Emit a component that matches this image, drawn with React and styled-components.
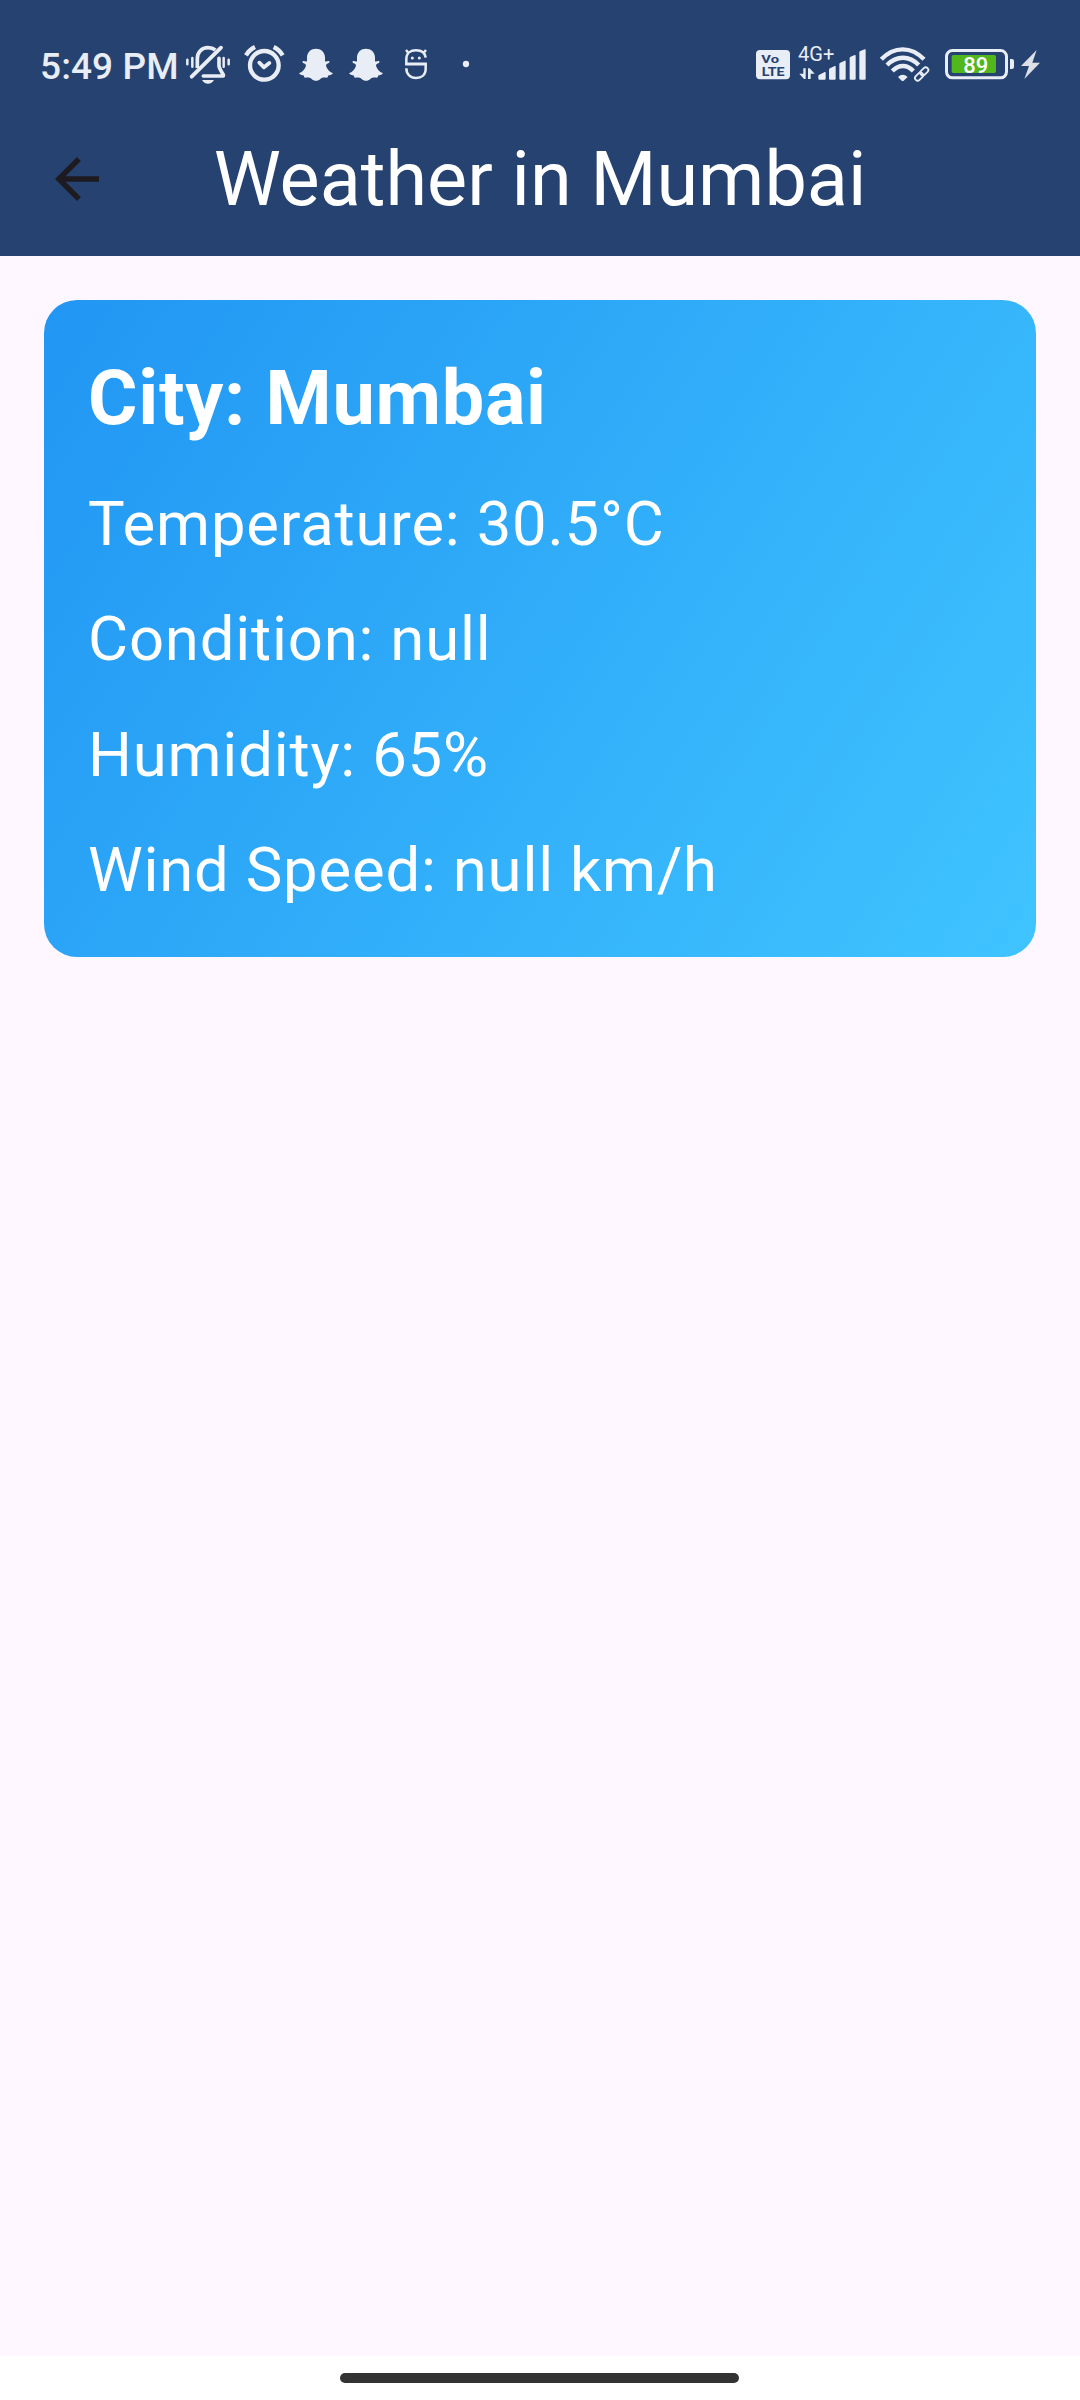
import React from "react";
import styled, { createGlobalStyle } from "styled-components";

const ink = "#e9edf6";
const navy = "#264270";

const GlobalStyle = createGlobalStyle`
  * { box-sizing: border-box; }
  body { margin: 0; background: #fef7ff; }
`;

const Screen = styled.div`
  width: 1080px;
  height: 2400px;
  display: flex;
  flex-direction: column;
  background: #fef7ff;
  font-family: Roboto, "Liberation Sans", sans-serif;
  color: #fff;
`;

const Header = styled.header`
  height: 256px;
  background: ${navy};
  display: flex;
  flex-direction: column;
`;

const StatusBar = styled.div`
  height: 102px;
  padding: 30px 35px 2px 40px;
  display: flex;
  justify-content: space-between;
`;

const Group = styled.div`
  display: flex;
  height: 70px;
`;

const Clock = styled.span`
  width: 144px;
  font-size: 37px;
  font-weight: 500;
  line-height: 73px;
  letter-spacing: 0.1px;
  white-space: nowrap;
  color: ${ink};
`;

const Glyph = styled.svg`
  display: block;
  flex: none;
  width: ${(p) => p.$w}px;
  height: 70px;
  margin-left: ${(p) => p.$gap || 0}px;
  overflow: visible;
  fill: none;
  stroke: ${ink};
  font-family: Roboto, "Liberation Sans", sans-serif;
  .solid { fill: ${ink}; stroke: none; }
`;

const AppBar = styled.div`
  height: 154px;
  display: flex;
  align-items: center;
`;

const BackButton = styled.button`
  width: 154px;
  height: 154px;
  padding: 0;
  border: 0;
  background: none;
  display: flex;
  align-items: center;
  justify-content: center;
  svg { display: block; width: 66px; height: 66px; fill: #1d1b20; }
`;

const Title = styled.h1`
  flex: 1;
  margin: 0 154px 0 0;
  text-align: center;
  font-size: 75.6px;
  font-weight: 400;
  line-height: 98px;
  white-space: nowrap;
`;

const Main = styled.main`
  flex: 1;
  padding: 44px;
`;

const Card = styled.section`
  height: 657.3px;
  padding: 44px;
  border-radius: 33px;
  background: linear-gradient(123.54deg, #2196f3, #40c4ff);
`;

const City = styled.h2`
  margin: 0 0 27.65px;
  font-size: 75.6px;
  font-weight: 700;
  line-height: 108.1px;
  letter-spacing: 0.72px;
  white-space: nowrap;
`;

const Detail = styled.p`
  margin: 0 0 27.5px;
  font-size: 61.6px;
  line-height: 88px;
  letter-spacing: 0.81px;
  white-space: nowrap;
`;

const NavBar = styled.footer`
  height: 44px;
  padding: 17px 1px 0 0;
  background: #fff;
  display: flex;
  justify-content: center;
`;

const HomeHandle = styled.div`
  width: 399px;
  height: 10px;
  border-radius: 5px;
  background: #333;
`;

const MutedBell = () => (
  <Glyph $w={48} viewBox="492 0 144 210" strokeLinecap="round">
    <path strokeWidth="7.5" d="M502 89v14M517 84v26M611 84v26M626 89v14" />
    <path strokeWidth="11" strokeLinecap="butt" d="M532 114V86C532 66 545 53 564 53C573 53 580 55 586 60" />
    <path strokeWidth="11" strokeLinejoin="round" d="M597 85V108Q598 116 610 134V138H550" />
    <path strokeWidth="11.5" d="M515 140L603 53" />
    <path className="solid" d="M546 150H582C578 157 572 161 564 161S550 157 546 150Z" />
  </Glyph>
);

const AlarmClock = () => (
  <Glyph $w={45} $gap={10} viewBox="36 0 135 210" strokeLinecap="round" strokeLinejoin="round">
    <circle cx="103" cy="106" r="43" strokeWidth="13" />
    <path strokeWidth="11.5" d="M88 98L102 112L118 99" />
    <path strokeWidth="13" strokeLinecap="butt" d="M48 76Q57 60 75 51M158 76Q149 60 131 51" />
  </Glyph>
);

const Ghost = ({ gap }) => (
  <Glyph $w={38} $gap={gap} viewBox="201 0 114 210">
    <path
      className="solid"
      d="M258 56C243 56 232 66 231 81L231 94C227 96 223 92 219 93C216 95 218 98 221 100C227 102 229 105 227 110C223 120 216 126 208 129C206 132 214 135 220 136C222 138 222 142 225 143C231 143 238 141 244 146C249 150 253 152 258 152C263 152 267 150 272 146C278 141 285 143 291 143C294 142 294 138 296 136C302 135 310 132 308 129C300 126 293 120 289 110C287 105 289 102 295 100C298 98 300 95 297 93C293 92 289 96 285 94L285 81C284 66 273 56 258 56Z"
    />
  </Glyph>
);

const Mascot = () => (
  <Glyph $w={26} $gap={18} viewBox="519 0 78 210" strokeWidth="7.5">
    <path d="M587 83C585 69 574 61 558 61C542 61 529 70 529 87V102H587V118C587 134 575 144 558 144C541 144 529 133 529 115" />
    <path d="M528 60L536 70M588 60L580 70" />
    <path className="solid" d="M526 98H590V106H526Z" />
    <circle className="solid" cx="547" cy="84" r="4.5" />
    <circle className="solid" cx="568" cy="84" r="4.5" />
  </Glyph>
);

const MoreDot = () => (
  <Glyph $w={10} $gap={32} viewBox="693 0 30 210">
    <circle className="solid" cx="708" cy="102" r="9.5" />
  </Glyph>
);

const VoLte = () => (
  <Glyph $w={34} viewBox="48 0 102 210">
    <rect className="solid" x="48" y="60" width="102" height="88" rx="12" />
    <g fill={navy} stroke="none" fontWeight="700">
      <text x="64" y="98" fontSize="34" textLength="53" lengthAdjust="spacingAndGlyphs">Vo</text>
      <text x="65" y="137" fontSize="40" textLength="69" lengthAdjust="spacingAndGlyphs">LTE</text>
    </g>
  </Glyph>
);

const Signal = () => (
  <Glyph $w={68} $gap={8} viewBox="174 0 204 210">
    <text className="solid" x="174" y="93" fontSize="59" textLength="109" lengthAdjust="spacingAndGlyphs">4G+</text>
    <path className="solid" d="M190 115H197V147H192L178 131H190ZM204 115H209L224 131H212V147H204Z" />
    <path
      className="solid"
      d="M235 138Q235 135 238 134L254 126Q257 125 257 128V146Q257 149 254 149H238Q235 149 235 146ZM267 119Q267 116 270 115L284 108Q287 107 287 110V146Q287 149 284 149H270Q267 149 267 146ZM298 102Q298 99 301 98L314 92Q317 91 317 94V146Q317 149 314 149H301Q298 149 298 146ZM329 84Q329 81 332 80L344 75Q347 74 347 77V146Q347 149 344 149H332Q329 149 329 146ZM358 67Q358 64 361 63L374 58Q377 57 377 60V146Q377 149 374 149H361Q358 149 358 146Z"
    />
  </Glyph>
);

const Wifi = () => (
  <Glyph $w={52} $gap={12} viewBox="414 0 156 210">
    <path strokeWidth="13" d="M424 88C462 48 514 48 552 88M441 105C470 76 508 76 536 105M457 123C477 103 501 103 520 123" />
    <path className="solid" d="M474 141Q488 127 503 141L491 152Q488 154 485 152Z" />
    <g transform="translate(545 132) rotate(-45)">
      <path stroke={navy} strokeWidth="16" d="M-17 0H17" />
      <rect x="-25" y="-8" width="28" height="16" rx="8" strokeWidth="5.5" />
      <rect x="-3" y="-8" width="28" height="16" rx="8" strokeWidth="5.5" />
    </g>
  </Glyph>
);

const Battery = () => (
  <Glyph $w={70} $gap={15} viewBox="135 0 210 210">
    <rect x="139.5" y="61.5" width="180" height="82" rx="18" strokeWidth="9" />
    <path className="solid" d="M330 87H336Q342 87 342 93V111Q342 117 336 117H330Z" />
    <rect x="155" y="75" width="133" height="54" rx="5" fill="#51b71d" stroke="none" />
    <text x="190" y="128" fill="#fff" stroke="none" fontSize="66" fontWeight="500" textLength="75" lengthAdjust="spacingAndGlyphs">89</text>
  </Glyph>
);

const Bolt = () => (
  <Glyph $w={26} $gap={4} viewBox="357 0 78 210">
    <path fill="#dde0e6" stroke="none" d="M410 60L363 108H387L373 147L420 98H397Z" />
  </Glyph>
);

const details = [
  "Temperature: 30.5°C",
  "Condition: null",
  "Humidity: 65%",
  "Wind Speed: null km/h",
];

export default function App() {
  return (
    <Screen>
      <GlobalStyle />
      <Header>
        <StatusBar>
          <Group>
            <Clock>5:49 PM</Clock>
            <MutedBell />
            <AlarmClock />
            <Ghost gap={10} />
            <Ghost gap={12} />
            <Mascot />
            <MoreDot />
          </Group>
          <Group>
            <VoLte />
            <Signal />
            <Wifi />
            <Battery />
            <Bolt />
          </Group>
        </StatusBar>
        <AppBar>
          <BackButton aria-label="Back">
            <svg viewBox="0 0 24 24">
              <path d="M20 11H7.83l5.59-5.59L12 4l-8 8 8 8 1.41-1.41L7.83 13H20v-2z" />
            </svg>
          </BackButton>
          <Title>Weather in Mumbai</Title>
        </AppBar>
      </Header>
      <Main>
        <Card>
          <City>City: Mumbai</City>
          {details.map((line) => (
            <Detail key={line}>{line}</Detail>
          ))}
        </Card>
      </Main>
      <NavBar>
        <HomeHandle />
      </NavBar>
    </Screen>
  );
}
